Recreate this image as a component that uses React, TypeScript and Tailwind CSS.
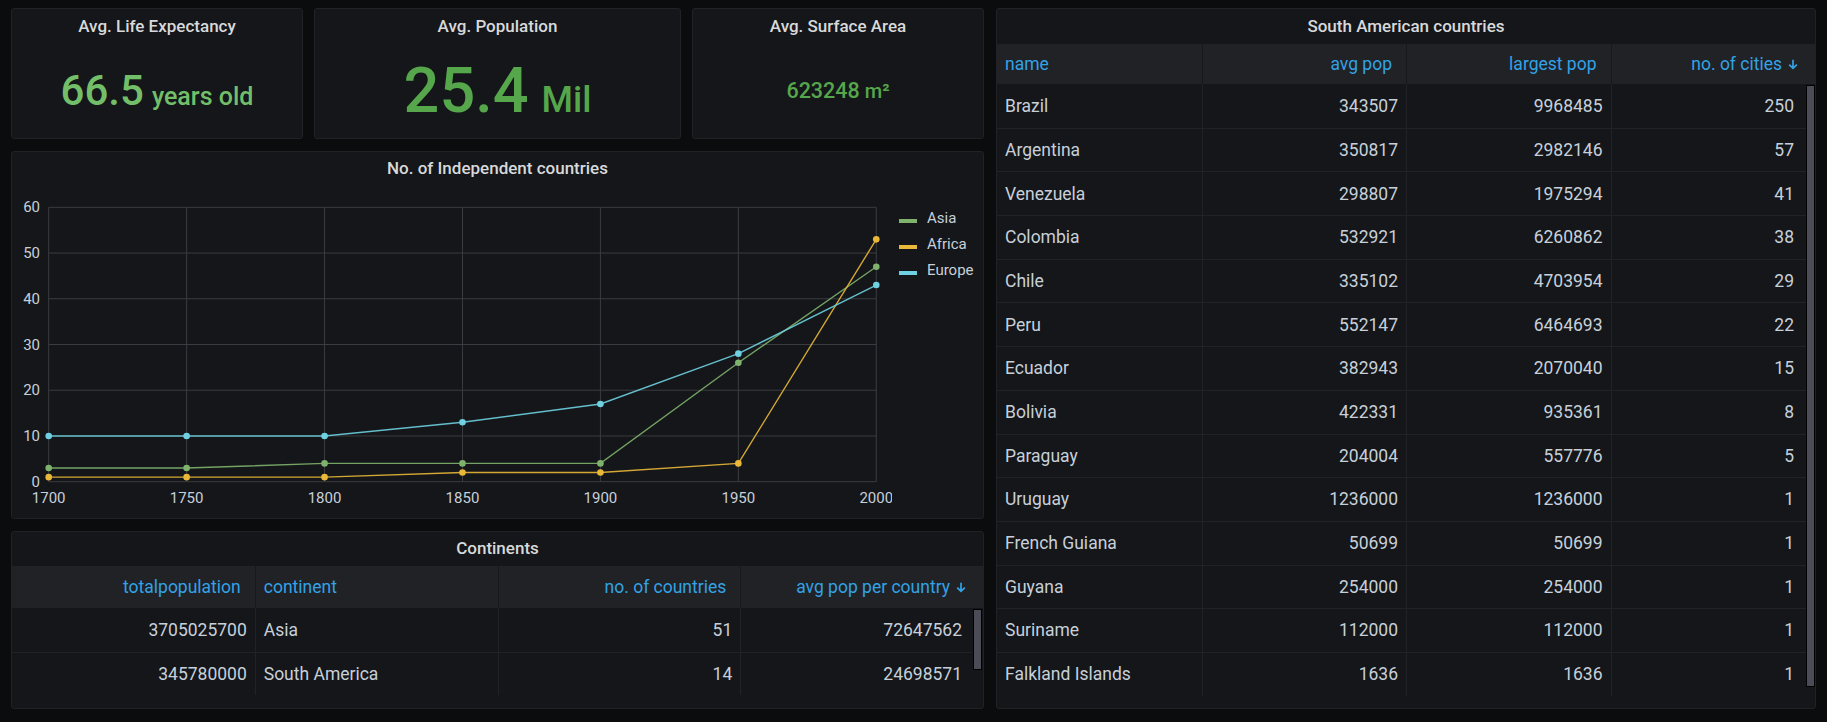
import React from 'react';

type Row = [string, string, string, string];

const southAmerica: Row[] = [
  ['Brazil', '343507', '9968485', '250'],
  ['Argentina', '350817', '2982146', '57'],
  ['Venezuela', '298807', '1975294', '41'],
  ['Colombia', '532921', '6260862', '38'],
  ['Chile', '335102', '4703954', '29'],
  ['Peru', '552147', '6464693', '22'],
  ['Ecuador', '382943', '2070040', '15'],
  ['Bolivia', '422331', '935361', '8'],
  ['Paraguay', '204004', '557776', '5'],
  ['Uruguay', '1236000', '1236000', '1'],
  ['French Guiana', '50699', '50699', '1'],
  ['Guyana', '254000', '254000', '1'],
  ['Suriname', '112000', '112000', '1'],
  ['Falkland Islands', '1636', '1636', '1'],
];

const continents: Row[] = [
  ['3705025700', 'Asia', '51', '72647562'],
  ['345780000', 'South America', '14', '24698571'],
];

function SortArrow() {
  return (
    <svg width="10" height="11" viewBox="0 0 10 11" className="ml-[6px] shrink-0">
      <path d="M5 0.8v8.6M1.2 5.6 5 9.4l3.8-3.8" stroke="#33a2e5" strokeWidth="1.7" fill="none" />
    </svg>
  );
}

function Panel({ className, children }: { className: string; children: React.ReactNode }) {
  return (
    <div className={`rounded-[3px] border border-[#202226] bg-[#141619] overflow-hidden ${className}`}>
      {children}
    </div>
  );
}

function StatPanel({
  title,
  value,
  unit,
  width,
  valueClass,
  unitClass,
  gapClass,
  colorClass,
}: {
  title: string;
  value: string;
  unit: string;
  width: string;
  valueClass: string;
  unitClass: string;
  gapClass: string;
  colorClass: string;
}) {
  return (
    <Panel className={`${width} h-full flex flex-col`}>
      <div className="h-[36px] shrink-0 flex items-center justify-center text-[17px] font-medium text-[#d8d9da]">
        {title}
      </div>
      <div className="flex-1 flex items-center justify-center pb-[2px]">
        <div className={`flex items-baseline leading-none font-medium ${colorClass}`}>
          <span className={valueClass}>{value}</span>
          <span className={`${unitClass} ${gapClass}`}>{unit}</span>
        </div>
      </div>
    </Panel>
  );
}

const X0 = 36.7;
const DX = 137.93;
const YB = 295.7;
const K = 4.573;
const years = [1700, 1750, 1800, 1850, 1900, 1950, 2000];
const series = [
  { name: 'Asia', color: '#7eb26d', data: [3, 3, 4, 4, 4, 26, 47] },
  { name: 'Africa', color: '#eab839', data: [1, 1, 1, 2, 2, 4, 53] },
  { name: 'Europe', color: '#6ed0e0', data: [10, 10, 10, 13, 17, 28, 43] },
];

function Chart() {
  const xs = years.map((_, i) => X0 + i * DX);
  const yTicks = [0, 10, 20, 30, 40, 50, 60];
  const xEnd = xs[xs.length - 1];
  const yTop = YB - 60 * K;
  return (
    <svg width="880" height="330" viewBox="0 0 880 330" className="block shrink-0">
      {yTicks.map((t) => (
        <line key={'h' + t} x1={X0} x2={xEnd} y1={YB - t * K} y2={YB - t * K} stroke="#3a3c41" strokeWidth="1" />
      ))}
      {xs.map((x, i) => (
        <line key={'v' + i} x1={x} x2={x} y1={yTop} y2={YB} stroke="#3a3c41" strokeWidth="1" />
      ))}
      {yTicks.map((t) => (
        <text key={'yl' + t} x={28} y={YB - t * K + 5} textAnchor="end" fontSize="15" fill="#c7d0d9">
          {t}
        </text>
      ))}
      {years.map((y, i) => (
        <text key={'xl' + y} x={xs[i]} y={317} textAnchor="middle" fontSize="15" fill="#c7d0d9">
          {y}
        </text>
      ))}
      {series.map((s) => (
        <g key={s.name}>
          <polyline
            points={s.data.map((v, i) => `${xs[i]},${YB - v * K}`).join(' ')}
            fill="none"
            stroke={s.color}
            strokeWidth="1.4"
            strokeOpacity="0.9"
          />
          {s.data.map((v, i) => (
            <circle key={i} cx={xs[i]} cy={YB - v * K} r="3.3" fill={s.color} />
          ))}
        </g>
      ))}
    </svg>
  );
}

function Legend() {
  return (
    <div className="ml-[7px] mt-[19px] flex flex-col">
      {series.map((s) => (
        <div key={s.name} className="h-[26px] flex items-center">
          <div className="w-[18px] h-[4px] mt-[5px]" style={{ backgroundColor: s.color }} />
          <span className="ml-[10px] text-[15px] text-[#c7d0d9]">{s.name}</span>
        </div>
      ))}
    </div>
  );
}

function DataTable({
  headers,
  aligns,
  rows,
  gridClass,
  headerGridClass,
  headerH,
  titleH,
  title,
  scrollAreaClass,
  thumbClass,
  lastBodyPad,
}: {
  headers: string[];
  aligns: ('l' | 'r')[];
  rows: Row[];
  gridClass: string;
  headerGridClass: string;
  headerH: string;
  titleH: string;
  title: string;
  scrollAreaClass: string;
  thumbClass: string;
  lastBodyPad: string;
}) {
  return (
    <>
      <div className={`${titleH} shrink-0 flex items-center justify-center text-[17px] font-medium text-[#d8d9da]`}>
        {title}
      </div>
      <div className={`grid ${headerGridClass} ${headerH} shrink-0 bg-[#202226] text-[17.5px] text-[#33a2e5]`}>
        {headers.map((h, i) => (
          <div
            key={h}
            className={`flex items-center h-full ${i > 0 ? 'border-l border-[#16181b]' : ''} ${
              aligns[i] === 'r' ? 'justify-end' : 'justify-start pl-[8px]'
            } ${aligns[i] === 'r' ? (i === headers.length - 1 ? 'pr-[17px]' : 'pr-[14px]') : ''}`}
          >
            <span>{h}</span>
            {i === headers.length - 1 && <SortArrow />}
          </div>
        ))}
      </div>
      <div className="flex">
        <div className={`flex-1 grid ${gridClass} text-[17.5px] text-[#c7d0d9]`}>
          {rows.map((r, ri) =>
            r.map((c, ci) => (
              <div
                key={ri + '-' + ci}
                className={`h-[43.7px] flex items-center whitespace-nowrap ${ri > 0 ? 'border-t border-[#202226]' : ''} ${
                  ci > 0 ? 'border-l border-[#202226]' : ''
                } ${aligns[ci] === 'r' ? 'justify-end' : 'justify-start pl-[8px]'} ${
                  aligns[ci] === 'r' ? (ci === r.length - 1 ? lastBodyPad : 'pr-[8px]') : ''
                }`}
              >
                {c}
              </div>
            ))
          )}
        </div>
        <div className={`${scrollAreaClass} shrink-0`}>
          <div className={`${thumbClass} mt-[1px] bg-[#4b4c55] border border-black`} />
        </div>
      </div>
    </>
  );
}

export default function App() {
  return (
    <div className="w-[1827px] h-[722px] bg-[#0b0c0e] font-['Roboto',sans-serif] flex gap-[12px] pl-[11px] pt-[8px] overflow-hidden">
      <div className="w-[973px] flex flex-col gap-[12px]">
        <div className="h-[131px] flex gap-[11px]">
          <StatPanel
            title="Avg. Life Expectancy"
            value="66.5"
            unit="years old"
            width="w-[292px]"
            valueClass="text-[42px]"
            unitClass="text-[25px]"
            gapClass="ml-[8px]"
            colorClass="text-[#73bf69]"
          />
          <StatPanel
            title="Avg. Population"
            value="25.4"
            unit="Mil"
            width="w-[367px]"
            valueClass="text-[63px]"
            unitClass="text-[36px]"
            gapClass="ml-[13px]"
            colorClass="text-[#56a64b]"
          />
          <StatPanel
            title="Avg. Surface Area"
            value="623248"
            unit="m²"
            width="w-[292px]"
            valueClass="text-[21.5px]"
            unitClass="text-[20px]"
            gapClass="ml-[5px]"
            colorClass="text-[#56a64b]"
          />
        </div>
        <Panel className="h-[368px] flex flex-col">
          <div className="h-[34px] shrink-0 flex items-center justify-center text-[17px] font-medium text-[#d8d9da]">
            No. of Independent countries
          </div>
          <div className="flex">
            <Chart />
            <Legend />
          </div>
        </Panel>
        <Panel className="h-[178px] flex flex-col">
          <DataTable
            title="Continents"
            titleH="h-[34px]"
            headerH="h-[42px]"
            headers={['totalpopulation', 'continent', 'no. of countries', 'avg pop per country']}
            aligns={['r', 'l', 'r', 'r']}
            rows={continents}
            headerGridClass="grid-cols-4"
            gridClass="grid-cols-[242.75px_242.75px_242.75px_1fr]"
            scrollAreaClass="w-[11px] pl-[1px]"
            thumbClass="w-[9px] h-[61px]"
            lastBodyPad="pr-[10px]"
          />
        </Panel>
      </div>
      <Panel className="w-[820px] h-[701px] flex flex-col">
        <DataTable
          title="South American countries"
          titleH="h-[35px]"
          headerH="h-[40px]"
          headers={['name', 'avg pop', 'largest pop', 'no. of cities']}
          aligns={['l', 'r', 'r', 'r']}
          rows={southAmerica}
          headerGridClass="grid-cols-4"
          gridClass="grid-cols-[204.5px_204.5px_204.5px_1fr]"
          scrollAreaClass="w-[9px]"
          thumbClass="w-[9px] h-[602px]"
          lastBodyPad="pr-[12px]"
        />
      </Panel>
    </div>
  );
}
